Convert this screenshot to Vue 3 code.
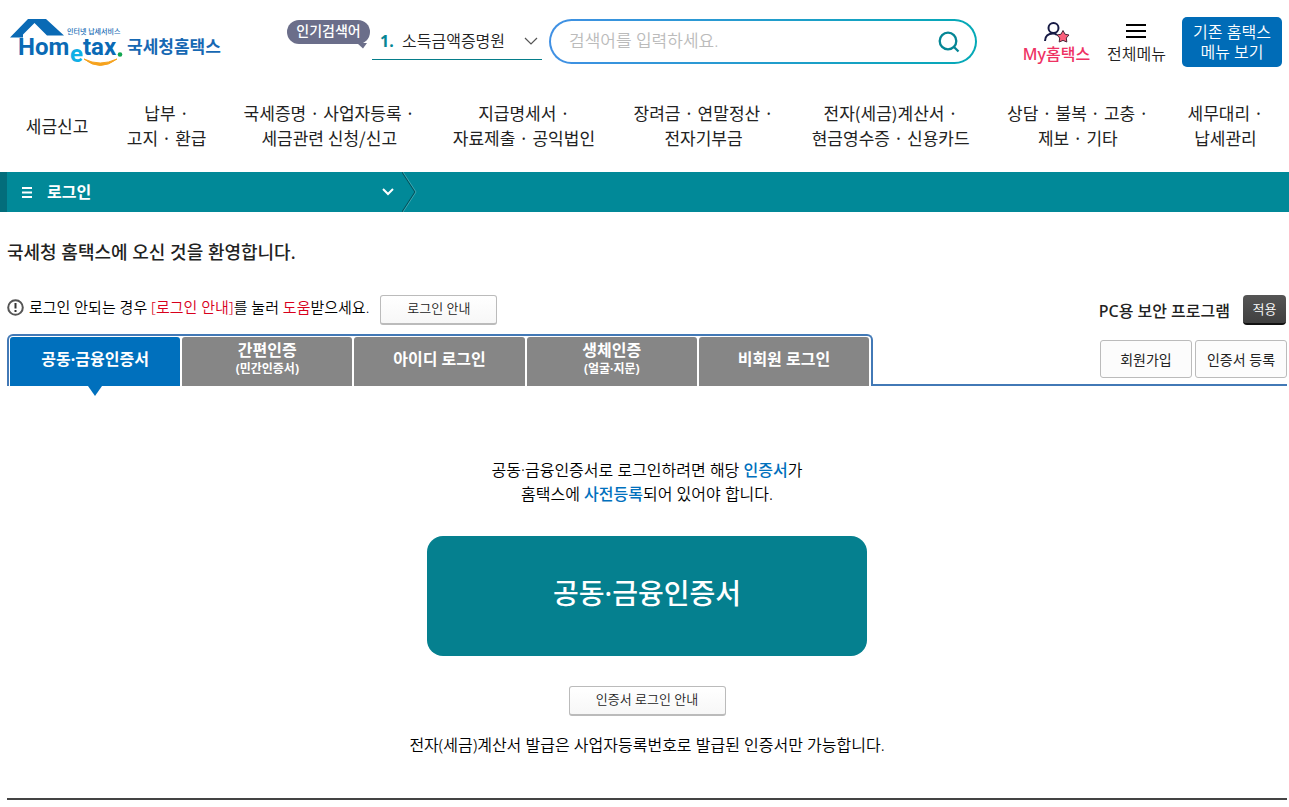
<script setup>
import { ref } from 'vue'

const menu = [
  ['세금신고'],
  ['납부 ·', '고지 · 환급'],
  ['국세증명 · 사업자등록 ·', '세금관련 신청/신고'],
  ['지급명세서 ·', '자료제출 · 공익법인'],
  ['장려금 · 연말정산 ·', '전자기부금'],
  ['전자(세금)계산서 ·', '현금영수증 · 신용카드'],
  ['상담 · 불복 · 고충 ·', '제보 · 기타'],
  ['세무대리 ·', '납세관리'],
]
const tabs = [
  { name: '공동·금융인증서' },
  { name: '간편인증', sub: '(민간인증서)' },
  { name: '아이디 로그인' },
  { name: '생체인증', sub: '(얼굴·지문)' },
  { name: '비회원 로그인' },
]
const active = ref(0)
const keyword = ref('')
</script>

<template>
  <div class="page">
    <header class="header">
      <a href="#" class="logo" aria-label="Hometax 국세청홈택스">
        <svg width="214" height="52" viewBox="0 0 214 52">
          <path d="M2 20.500 L20 2 H38 L56 18.500 H39 L26.500 6 L15 17.500 V20.500 Z" fill="#0a6ab5" />
          <text x="59" y="17" class="lg-tag">인터넷 납세서비스</text>
          <text x="10" y="38" class="lg-en">Hom</text>
          <text x="62" y="45" class="lg-en lg-e">e</text>
          <text x="75" y="38" class="lg-en">tax</text>
          <circle cx="112" cy="37.500" r="2.300" fill="#12a650" />
          <path d="M76 42 Q92 55 109 42 Q92 50 76 42 Z" fill="#f6a21c" stroke="#f6a21c" stroke-width="1" />
          <text x="119" y="36" class="lg-ko">국세청홈택스</text>
        </svg>
      </a>
      <span class="pill">인기검색어
        <svg class="tail" width="10" height="6" viewBox="0 0 10 6"><path d="M0 0 H10 L6 5.500 Z" fill="#6b6e8a" /></svg>
      </span>
      <label class="rank">
        <b>1.</b>
        <select aria-label="인기검색어"><option>소득금액증명원</option></select>
        <svg width="14" height="9" viewBox="0 0 14 9"><path d="M1 1 L7 7 L13 1" fill="none" stroke="#555" stroke-width="1.2" /></svg>
      </label>
      <form class="search" @submit.prevent>
        <input v-model="keyword" type="text" placeholder="검색어를 입력하세요." aria-label="검색어" />
        <button type="submit" aria-label="검색">
          <svg width="22" height="22" viewBox="0 0 22 22" fill="none" stroke="#058695" stroke-width="2.300">
            <circle cx="10" cy="10" r="8.3" /><path d="M15.5 15.5 L20.5 20.5" />
          </svg>
        </button>
      </form>
      <a href="#" class="quick my">
        <svg width="28" height="22" viewBox="0 0 28 22">
          <g fill="none" stroke="#171b45" stroke-width="2">
            <circle cx="11.500" cy="7" r="5" />
            <path d="M3 20 C3 15 6.500 12.500 11 12.500 C12.500 12.500 14 13 15 14" />
          </g>
          <path d="M21 9.500 L23 13.200 L27 14 L24.300 17 L24.800 21 L21 19.400 L17.200 21 L17.700 17 L15 14 L19 13.200 Z" fill="#fb5f7b" stroke="#4a2638" stroke-width="1" stroke-linejoin="round" />
        </svg>
        <span>My홈택스</span>
      </a>
      <a href="#" class="quick all">
        <svg width="22" height="22" viewBox="0 0 22 22"><path d="M0 4 H20 M0 10 H20 M0 16 H20" stroke="#000" stroke-width="2" /></svg>
        <span>전체메뉴</span>
      </a>
      <button type="button" class="old">기존 홈택스<br />메뉴 보기</button>
    </header>

    <nav class="menu">
      <a v-for="item in menu" :key="item[0]" href="#"><span v-for="line in item" :key="line">{{ line }}</span></a>
    </nav>

    <div class="bar">
      <button type="button" class="crumb">
        <svg width="10" height="11" viewBox="0 0 10 11"><path d="M0 1 H10 M0 5.500 H10 M0 10 H10" stroke="#fff" stroke-width="2" /></svg>
        <span>로그인</span>
        <svg class="down" width="12" height="8" viewBox="0 0 12 8"><path d="M1 1 L6 6 L11 1" fill="none" stroke="#fff" stroke-width="2" /></svg>
      </button>
      <svg width="15" height="40" viewBox="0 0 15 40" fill="none">
        <path d="M0 0 L13 20 L0 40" stroke="#04525c" stroke-width="1.200" /><path d="M1 0 L14 20 L1 40" stroke="#5ab8c0" stroke-width="0.700" />
      </svg>
    </div>

    <main class="main">
      <h1>국세청 홈택스에 오신 것을 환영합니다.</h1>
      <div class="row">
        <p class="notice">
          <svg width="17" height="17" viewBox="0 0 17 17" fill="none" stroke="#555">
            <circle cx="8.500" cy="8.500" r="7.300" stroke-width="2" /><path d="M8.500 4 V9.500 M8.500 11 V13" stroke="#333" stroke-width="2" />
          </svg>
          <span>로그인 안되는 경우 <em>[로그인 안내]</em>를 눌러 <em>도움</em>받으세요.</span>
        </p>
        <button type="button" class="btn guide">로그인 안내</button>
        <span class="pc">PC용 보안 프로그램</span>
        <button type="button" class="apply">적용</button>
      </div>

      <div class="tabrow">
        <div class="tabs" role="tablist">
          <button v-for="(t, i) in tabs" :key="t.name" type="button" role="tab" :aria-selected="i === active" :class="{ on: i === active }" @click="active = i">
            <span>{{ t.name }}</span><small v-if="t.sub">{{ t.sub }}</small>
          </button>
        </div>
        <div class="side">
          <button type="button">회원가입</button>
          <button type="button">인증서 등록</button>
        </div>
      </div>

      <section class="panel">
        <p>공동·금융인증서로 로그인하려면 해당 <b>인증서</b>가<br />홈택스에 <b>사전등록</b>되어 있어야 합니다.</p>
        <button type="button" class="login">공동·금융인증서</button>
        <button type="button" class="btn cert">인증서 로그인 안내</button>
        <p>전자(세금)계산서 발급은 사업자등록번호로 발급된 인증서만 가능합니다.</p>
      </section>
    </main>
  </div>
</template>

<style>
body { background: #fff; }
</style>

<style scoped>
.page { font-family: "Noto Sans", "Noto Sans CJK KR", sans-serif; color: #000; font-size: 16px; font-weight: 350; word-break: keep-all; }
.page * { box-sizing: border-box; }
a { color: inherit; text-decoration: none; }
button, input, select { font: inherit; color: inherit; margin: 0; padding: 0; border: 0; background: none; }
button { cursor: pointer; white-space: nowrap; }
svg { display: block; flex: none; }
p, h1 { margin: 0; }

.header { display: flex; align-items: flex-start; padding: 17px 7px 0 8px; height: 84px; }
.logo { flex: none; }
.lg-tag { font-size: 7px; font-weight: 500; fill: #1a6db5; }
.lg-en { font-family: Roboto, sans-serif; font-size: 24px; font-weight: 700; fill: #0a6ab5; }
.lg-e { fill: #10b0e6; }
.lg-ko { font-size: 17px; font-weight: 700; fill: #1668b3; }
.pill { position: relative; flex: none; width: 83px; height: 24px; margin: 3px 2px 0 65px; border-radius: 12px; background: #6b6e8a; color: #fff; font-size: 14px; font-weight: 500; line-height: 22px; text-align: center; }
.tail { position: absolute; right: 3px; top: 23px; }
.rank { flex: none; display: flex; align-items: center; width: 170px; height: 43px; padding: 6px 4px 0 8px; border-bottom: 1px solid #057d8a; }
.rank b { color: #058695; font-weight: 700; width: 22px; }
.rank select { appearance: none; flex: 1; outline: 0; color: #222; }
.search { flex: 1; display: flex; align-items: center; height: 45px; margin: 2px 46px 0 7px; padding: 0 15px 0 18px; border: 2px solid transparent; border-radius: 23px; background: linear-gradient(#fff, #fff) padding-box, linear-gradient(90deg, #4090e4, #04a9b6) border-box; }
.search input { flex: 1; min-width: 0; padding-bottom: 2px; outline: 0; font-size: 17px; }
.search input::placeholder { color: #bbb; opacity: 1; }
.quick { flex: none; display: flex; flex-direction: column; align-items: center; padding-top: 4px; line-height: 22px; color: #222; }
.my { color: #ee3263; font-weight: 500; margin-right: 17px; }
.all { margin-right: 16px; }
.old { flex: none; width: 100px; height: 50px; border-radius: 5px; background: #006cb7; color: #fff; line-height: 20px; }

.menu { display: grid; grid-template-columns: 102fr 117fr 208fr 181fr 178fr 196fr 178fr 117fr; align-items: center; height: 88px; padding: 0 5px 6px 6px; font-family: "Noto Sans CJK KR", sans-serif; font-size: 17px; font-weight: 400; line-height: 25px; color: #222; }
.menu a { display: flex; flex-direction: column; align-items: center; white-space: nowrap; }

.bar { display: flex; height: 40px; background: #018998; border-left: 7px solid #036d7b; }
.crumb { display: flex; align-items: center; width: 395px; padding: 0 8px 0 15px; color: #fff; font-weight: 700; }
.crumb span { margin-left: 15px; padding-bottom: 2px; }
.down { margin-left: auto; }

.main { margin: 0 2px 0 7px; padding-top: 25px; border-bottom: 2px solid #444; }
h1 { font-size: 18px; line-height: 30px; font-weight: 500; color: #222; }
.row { display: flex; align-items: center; margin-top: 28px; height: 30px; }
.notice { display: flex; align-items: center; gap: 5px; padding-bottom: 6px; font-size: 15px; line-height: 24px; white-space: nowrap; }
.notice em { color: #d8001c; font-style: normal; }
.btn { height: 30px; padding-bottom: 3px; border: 1px solid #bbb; border-bottom: 2px solid #bbb; border-radius: 3px; background: linear-gradient(#fff, #f7f7f7); color: #222; font-size: 13px; line-height: 24px; }
.guide { width: 117px; margin-left: 11px; }
.pc { margin-left: auto; font-weight: 500; color: #222; white-space: nowrap; }
.apply { width: 43px; height: 30px; margin: 0 1px 0 13px; padding-bottom: 2px; border-radius: 4px; border-bottom: 2px solid #111; background: linear-gradient(#555, #404040); color: #fff; font-size: 13px; }

.tabrow { display: grid; grid-template-columns: 866fr 414fr; margin-top: 9px; height: 52px; }
.tabs { display: flex; gap: 2px; padding: 1px 2px 0 1px; border: 2px solid #4279b6; border-bottom: 0; border-radius: 6px 6px 0 0; }
.tabs button { position: relative; flex: 1; display: flex; flex-direction: column; align-items: center; justify-content: center; padding-bottom: 5px; border-radius: 3px 3px 0 0; background: #868686; color: #fff; font-weight: 700; line-height: 20px; }
.tabs small { font-size: 12px; line-height: 18px; }
.tabs .on { background: #0070bd; }
.tabs .on::after { content: ""; position: absolute; top: 100%; left: 50%; margin-left: -7px; border: 7px solid transparent; border-top: 10px solid #0070bd; border-bottom: 0; }
.side { display: flex; justify-content: flex-end; gap: 3px; padding-top: 6px; border-bottom: 2px solid #4279b6; }
.side button { width: 92px; height: 38px; border: 1px solid #bbb; border-radius: 3px; background: #fcfcfc; color: #222; font-size: 14px; font-weight: 400; }

.panel { display: flex; flex-direction: column; align-items: center; padding: 72px 0 41px; text-align: center; line-height: 24px; }
.panel b { color: #0070bd; font-weight: 500; }
.login { width: 440px; height: 120px; margin-top: 30px; padding-bottom: 6px; border-radius: 16px; background: #05808f; color: #fff; font-size: 28px; font-weight: 500; }
.cert { width: 157px; margin: 30px 0 17px; }
</style>
